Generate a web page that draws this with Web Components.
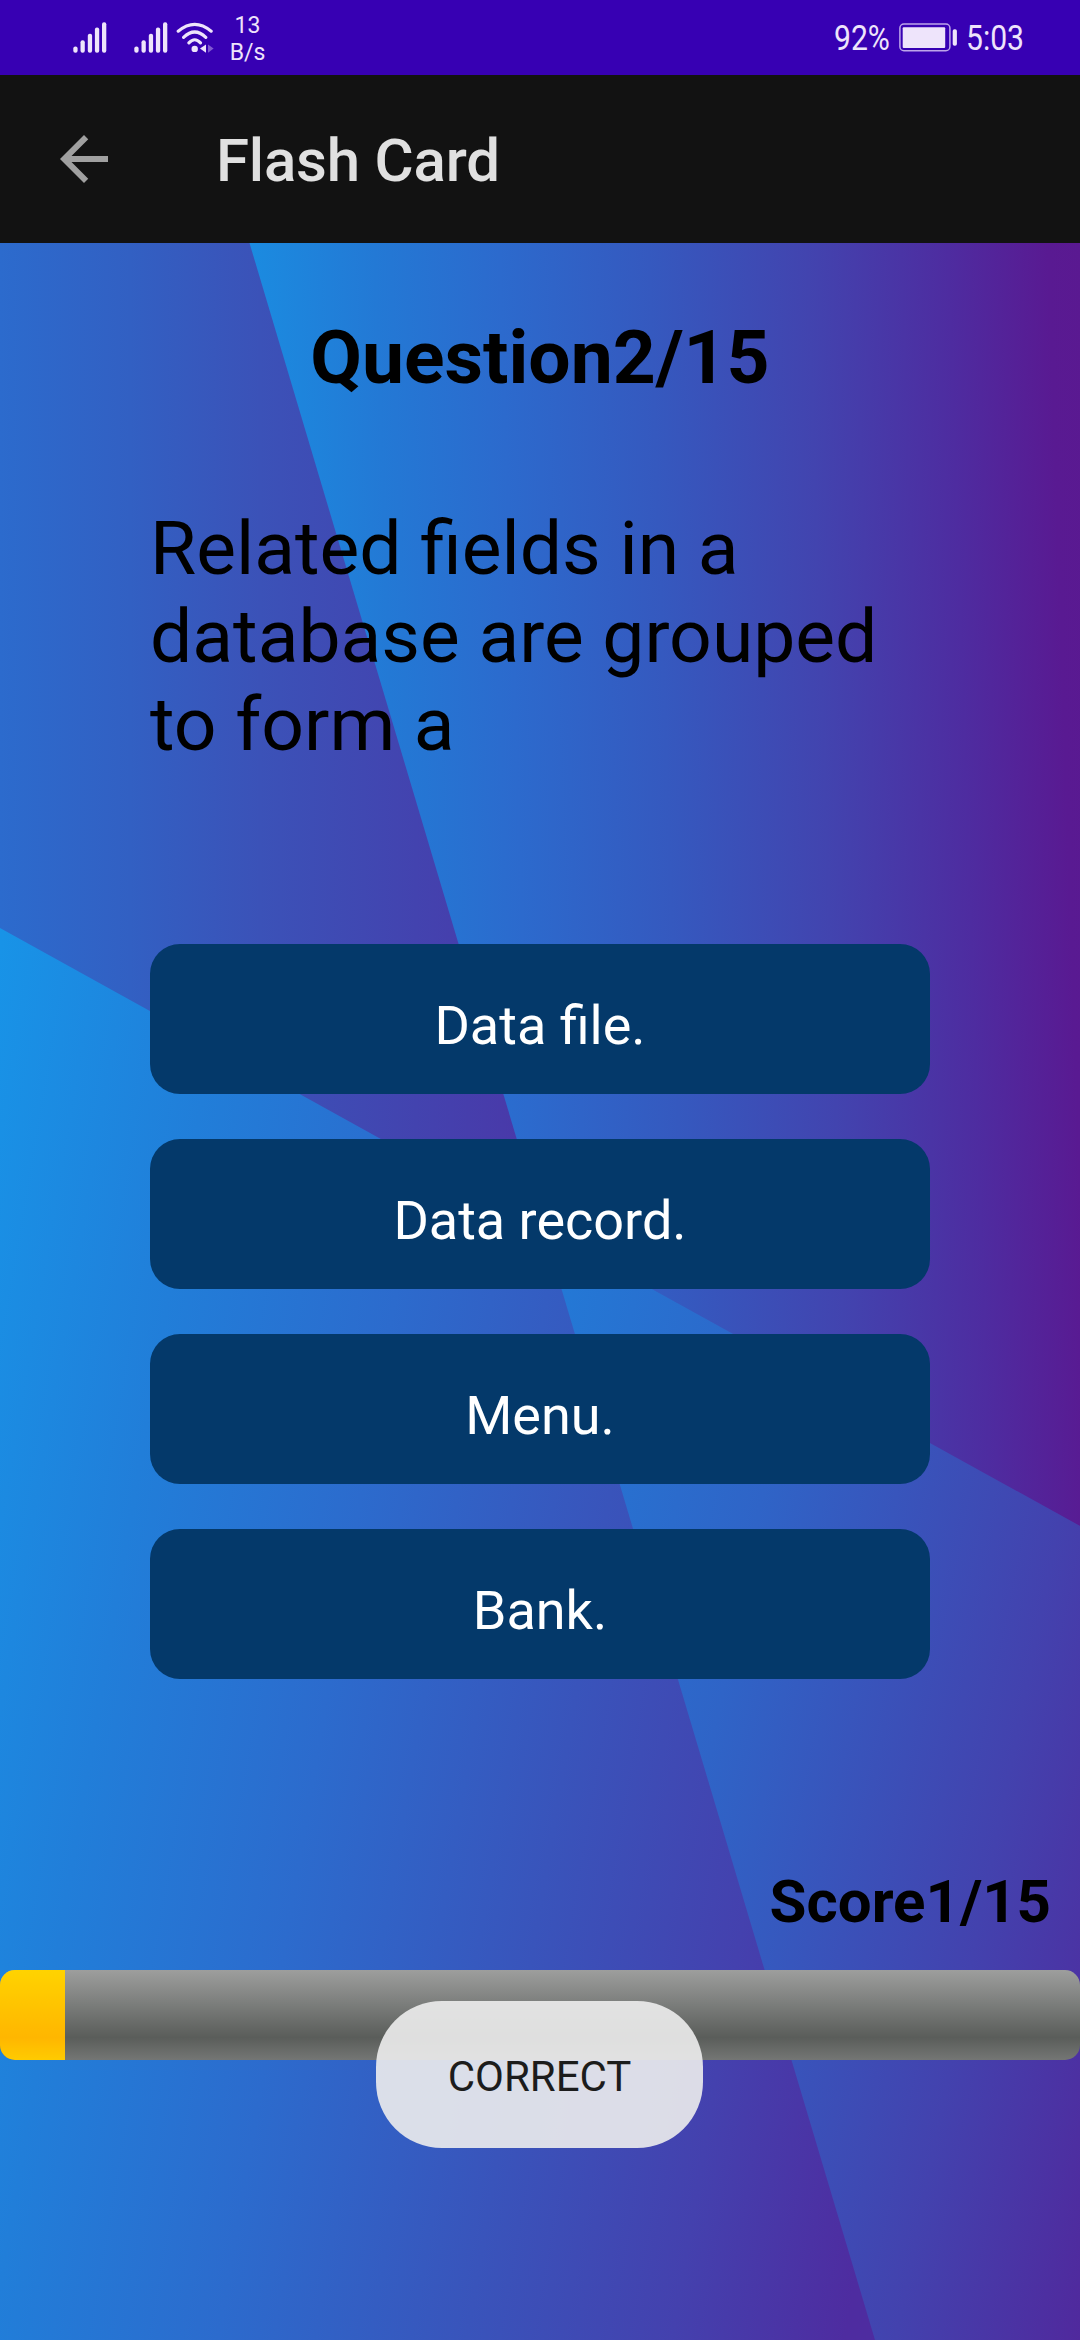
<!DOCTYPE html>
<html lang="en">
<head>
<meta charset="utf-8">
<title>Flash Card</title>
<style>
  html, body { margin: 0; padding: 0; }
  body { width: 1080px; height: 2340px; overflow: hidden; background: #121212; font-family: Roboto, "Liberation Sans", sans-serif; }
</style>
</head>
<body>
<flash-app></flash-app>
<script>
const define = (name, html) => {
  const template = document.createElement('template');
  template.innerHTML = html;
  customElements.define(name, class extends HTMLElement {
    constructor() {
      super();
      this.attachShadow({ mode: 'open' }).append(template.content.cloneNode(true));
    }
  });
};

define('signal-bars', `
  <style>:host{display:block;width:34px;height:31px} svg{display:block}</style>
  <svg width="34" height="31" viewBox="0 0 34 31" fill="#eee4fb">
    <rect x="0.3" y="24.4" width="4.3" height="6.3" rx="2"/>
    <rect x="7.5" y="18.2" width="4.3" height="12.5" rx="2"/>
    <rect x="14.8" y="11.8" width="4.3" height="18.9" rx="2"/>
    <rect x="21.9" y="5.4" width="4.3" height="25.3" rx="2"/>
    <rect x="29" y="0.2" width="4.3" height="30.5" rx="2"/>
  </svg>`);

define('wifi-icon', `
  <style>:host{display:block;width:38px;height:31px} svg{display:block}</style>
  <svg width="38" height="31" viewBox="0 0 38 31" fill="none" stroke="#eee4fb" stroke-width="3.1" stroke-linecap="round">
    <path d="M2.2 9.2Q18.7-4.6 35.2 9.2M7.6 15.4Q18.7 4.6 29.8 15.4M12.9 20.9Q18.7 14.6 24.5 20.9"/>
    <circle cx="18.7" cy="26.9" r="3.2" fill="#eee4fb" stroke="none"/>
    <path d="M30 22.4v8.4l-6-4.2z" fill="#eee4fb" stroke="none"/>
    <path d="M32 22.4v8.4l5.6-4.2z" fill="#8059d0" stroke="none"/>
  </svg>`);

define('battery-icon', `
  <style>:host{display:block;width:59px;height:29px} svg{display:block}</style>
  <svg width="59" height="29" viewBox="0 0 59 29">
    <rect x="0.9" y="1.1" width="50" height="26.6" rx="4" fill="none" stroke="#bda5ea" stroke-width="1.5"/>
    <rect x="3.7" y="4.3" width="42.5" height="20.6" rx="1" fill="#eee4fb"/>
    <rect x="53.7" y="6.3" width="4.2" height="16.4" rx="1.8" fill="#eee4fb"/>
  </svg>`);

define('status-bar', `
  <style>
    :host{display:flex;height:75px;box-sizing:border-box;padding:0 56px 0 73px;background:#3700b3;color:#eee4fb;justify-content:space-between}
    .left,.right{display:flex;align-items:flex-start}
    signal-bars{margin:21.7px 27px 0 0}
    signal-bars + signal-bars{margin-right:7px}
    wifi-icon{margin-top:21.7px;margin-left:1px}
    .rate{width:50px;margin:12px 0 0 8.5px;text-align:center;font-size:23px;line-height:27.3px}
    .rate div{height:27.3px}
    .cond{font-size:35px;line-height:41px;margin-top:18px;white-space:nowrap;transform:scaleX(.86);transform-origin:0 0}
    .pct{width:65px}
    .time{width:58px}
    battery-icon{margin:23px 8.5px 0 0}
  </style>
  <div class="left"><signal-bars></signal-bars><signal-bars></signal-bars><wifi-icon></wifi-icon>
    <div class="rate"><div>13</div><div>B/s</div></div></div>
  <div class="right"><div class="cond pct">92%</div><battery-icon></battery-icon><div class="cond time">5:03</div></div>`);

define('app-bar', `
  <style>
    :host{display:flex;height:168px;box-sizing:border-box;padding-left:48px;background:#121212;align-items:center}
    svg{display:block;width:72px;height:72px;margin-right:96px}
    h1{margin:4px 0 0;font-size:60px;line-height:70px;font-weight:500;letter-spacing:-.2px;color:#e0e0e0;white-space:nowrap}
  </style>
  <svg viewBox="0 0 24 24" fill="#a0a0a0"><path d="M20 11H7.83l5.59-5.59L12 4l-8 8 8 8 1.41-1.41L7.83 13H20v-2z"/></svg>
  <h1><slot></slot></h1>`);

define('quiz-backdrop', `
  <style>:host{display:block;width:1080px;height:2097px} svg{display:block}</style>
  <svg width="1080" height="2097" viewBox="0 243 1080 2097">
    <defs>
      <linearGradient id="a" gradientUnits="userSpaceOnUse" x1="0" y1="243" x2="520" y2="243">
        <stop offset="0" stop-color="#2c6bcd"/><stop offset=".25" stop-color="#3260c3"/><stop offset=".5" stop-color="#3b52b8"/><stop offset=".8" stop-color="#4343af"/><stop offset="1" stop-color="#4939a9"/>
      </linearGradient>
      <linearGradient id="b" gradientUnits="userSpaceOnUse" x1="250" y1="243" x2="1080" y2="215">
        <stop offset="0" stop-color="#1b8be0"/><stop offset=".15" stop-color="#2379d5"/><stop offset=".3" stop-color="#2c6acd"/><stop offset=".48" stop-color="#3559bf"/><stop offset=".67" stop-color="#4244af"/><stop offset=".84" stop-color="#4e2ca0"/><stop offset=".96" stop-color="#591a92"/><stop offset="1" stop-color="#5a1991"/>
      </linearGradient>
      <linearGradient id="c" gradientUnits="userSpaceOnUse" x1="0" y1="950" x2="1050" y2="1128">
        <stop offset="0" stop-color="#1893e7"/><stop offset=".21" stop-color="#217ed9"/><stop offset=".42" stop-color="#2c6bcd"/><stop offset=".65" stop-color="#3954bb"/><stop offset=".84" stop-color="#4441ae"/><stop offset="1" stop-color="#4e2ca0"/>
      </linearGradient>
      <linearGradient id="d" gradientUnits="userSpaceOnUse" x1="580" y1="1150" x2="1290" y2="1292">
        <stop offset="0" stop-color="#2379d6"/><stop offset=".34" stop-color="#2f64c7"/><stop offset=".75" stop-color="#4342ae"/><stop offset="1" stop-color="#50299d"/>
      </linearGradient>
    </defs>
    <path fill="url(#a)" d="M0 243H1080V2340H0z"/>
    <path fill="url(#b)" d="M249.5 243H1080V2340H875z"/>
    <path fill="url(#c)" d="M0 928L1080 1526V2340H0z"/>
    <path fill="url(#d)" d="M543.6 1229L1080 1526V2340H875z"/>
  </svg>`);

define('answer-button', `
  <style>
    :host{display:block}
    button{display:block;width:100%;height:150px;margin:0;padding:13px 0 0;border:0;border-radius:30px;background:#04396a;color:#fff;font:400 54px/64px Roboto,"Liberation Sans",sans-serif;text-align:center}
  </style>
  <button><slot></slot></button>`);

define('score-progress', `
  <style>
    :host{display:block;height:90px;border-radius:15px;overflow:hidden;background:linear-gradient(#9d9e9d,#5a5d5a 75%,#747674)}
    div{width:65px;height:90px;background:linear-gradient(#ffd300,#ffb600 75%,#ffcb00)}
  </style>
  <div></div>`);

define('toast-message', `
  <style>
    :host{display:block;box-sizing:border-box;width:327px;height:147px;border-radius:66px;background:rgba(237,237,237,.9);color:#1c1c1c;font-size:42px;line-height:49px;padding-top:51px;text-align:center}
  </style>
  <slot></slot>`);

define('quiz-screen', `
  <style>
    :host{display:grid;height:2097px;color:#000}
    quiz-backdrop,main{grid-area:1/1}
    main{display:flex;flex-direction:column;position:relative}
    h2{margin:70px 0 0;font-size:75px;line-height:88px;font-weight:700;text-align:center}
    p{margin:103px 150px 0;height:264px;font-size:75px;line-height:88px}
    .answers{display:flex;flex-direction:column;gap:45px;margin:176px 150px 0}
    .score{margin:188px 29px 0 0;font-size:60px;line-height:70px;font-weight:700;text-align:right}
    score-progress{margin-top:33px}
    toast-message{position:absolute;left:376px;top:1758px}
  </style>
  <quiz-backdrop></quiz-backdrop>
  <main>
    <h2>Question2/15</h2>
    <p>Related fields in a database are grouped to form a</p>
    <div class="answers">
      <answer-button>Data file.</answer-button>
      <answer-button>Data record.</answer-button>
      <answer-button>Menu.</answer-button>
      <answer-button>Bank.</answer-button>
    </div>
    <div class="score">Score1/15</div>
    <score-progress></score-progress>
    <toast-message>CORRECT</toast-message>
  </main>`);

define('flash-app', `
  <style>:host{display:block;width:1080px;height:2340px}</style>
  <status-bar></status-bar>
  <app-bar>Flash Card</app-bar>
  <quiz-screen></quiz-screen>`);
</script>
</body>
</html>
